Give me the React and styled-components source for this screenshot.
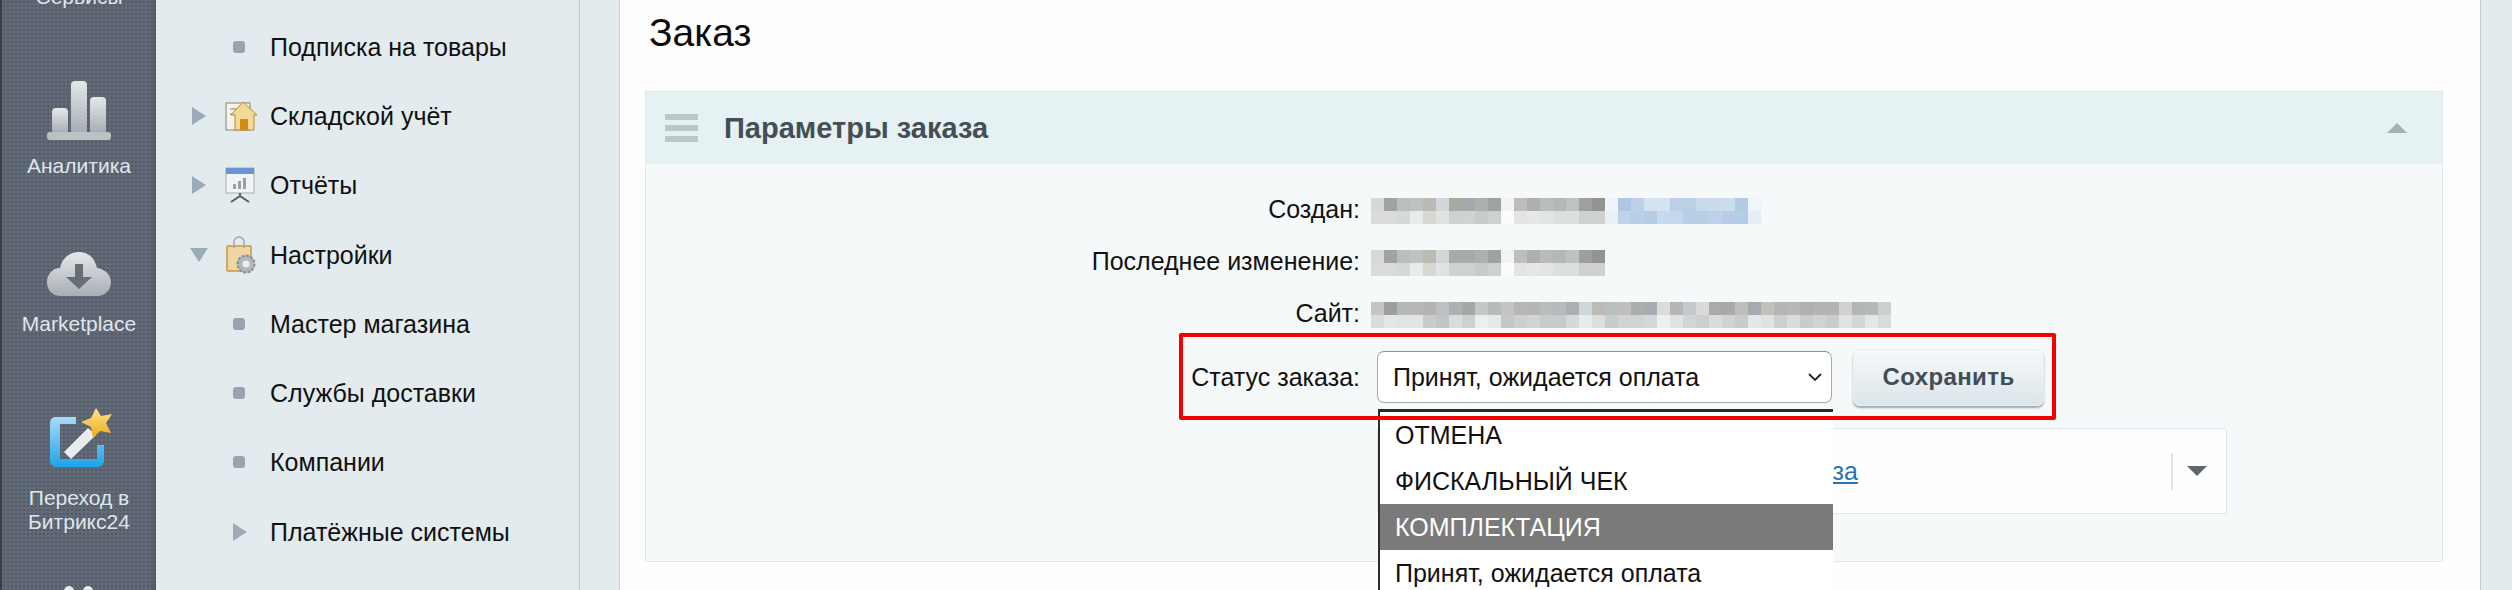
import React from "react";
import styled, { createGlobalStyle } from "styled-components";

const Global = createGlobalStyle`
  html, body { margin: 0; padding: 0; background: #fff; }
  body { font-family: "Liberation Sans", Arial, sans-serif; color: #000; }
`;

const Page = styled.div`
  display: flex;
  width: 2512px;
  height: 590px;
  overflow: hidden;
  background: #e3ebee;
`;

const Rail = styled.nav`
  flex: 0 0 156px;
  box-sizing: border-box;
  height: 590px;
  overflow: hidden;
  border-left: 2px solid #3b3d41;
  background-color: #626a77;
  background-image: radial-gradient(circle, rgba(70, 76, 88, 0.55) 1px, transparent 1.3px);
  background-size: 4px 4px;
  box-shadow: inset -5px 0 5px -3px rgba(60, 66, 78, 0.55);
  display: flex;
  flex-direction: column;
  align-items: center;
`;

const RailItem = styled.div`
  display: flex;
  flex-direction: column;
  align-items: center;
  flex: 0 0 auto;
  height: ${(p) => p.$h}px;
  box-sizing: border-box;
`;

const RailLabel = styled.span`
  color: #dfe6ea;
  font-size: 21px;
  line-height: 24px;
  text-align: center;
  margin-top: ${(p) => p.$mt || 0}px;
`;

const Tree = styled.aside`
  flex: 0 0 424px;
  box-sizing: border-box;
  border-right: 1px solid #b9cbd8;
  padding-top: 12px;
  background: #e3ebee;
`;

const TreeRow = styled.div`
  display: grid;
  grid-template-columns: 114px 1fr;
  align-items: center;
  height: 69.3px;
`;

const TreeMarks = styled.div`
  height: 100%;
  display: flex;
  align-items: center;
  padding-left: ${(p) => p.$pl}px;
`;

const ArrowSlot = styled.span`
  flex: 0 0 33px;
  display: flex;
  align-items: center;
`;

const Arrow = styled.span`
  display: block;
  width: 0;
  height: 0;
  border-top: 9px solid transparent;
  border-bottom: 9px solid transparent;
  border-left: 14px solid #9dabb9;
`;

const ArrowDown = styled.span`
  display: block;
  width: 0;
  height: 0;
  margin-left: -2px;
  border-left: 9px solid transparent;
  border-right: 9px solid transparent;
  border-top: 14px solid #9dabb9;
`;

const Bullet = styled.span`
  display: block;
  width: 12px;
  height: 12px;
  border-radius: 3px;
  background: #98a5b1;
`;

const TreeLabel = styled.span`
  font-size: 25px;
  line-height: 30px;
  color: #111;
  white-space: nowrap;
`;

const Gutter = styled.div`
  flex: 0 0 39px;
  border-right: 1px solid #cbd6da;
`;

const Content = styled.main`
  flex: 1 1 auto;
  min-width: 0;
  background: #fefefe;
  padding: 0 37px 0 25px;
`;

const Title = styled.h1`
  margin: 0 0 0 4px;
  height: 91px;
  padding-top: 11px;
  box-sizing: border-box;
  font-size: 39px;
  line-height: 44px;
  font-weight: 400;
  color: #0c0c0c;
`;

const Panel = styled.section`
  height: 471px;
  box-sizing: border-box;
  border: 1px solid #e0e8ea;
  background: #f5f9fa;
  position: relative;
`;

const PanelHead = styled.header`
  height: 72px;
  background: #e5f1f2;
  display: flex;
  align-items: center;
  padding: 0 35px 0 19px;
`;

const Burger = styled.span`
  display: flex;
  flex-direction: column;
  gap: 5px;
  width: 33px;
  margin-right: 26px;
  & > i {
    display: block;
    height: 6px;
    background: #bac8ca;
  }
`;

const PanelTitle = styled.h2`
  margin: 0;
  flex: 1;
  font-size: 29px;
  font-weight: 700;
  color: #454e54;
`;

const CollapseArrow = styled.span`
  width: 0;
  height: 0;
  border-left: 10px solid transparent;
  border-right: 10px solid transparent;
  border-bottom: 10px solid #a6b0b2;
  margin-top: -1px;
`;

const Fields = styled.div`
  display: grid;
  grid-template-columns: 714px 1fr;
  column-gap: 11px;
  grid-template-rows: 52px 52px 52px 72px 101px;
  align-items: center;
  padding-top: 21px;
`;

const FieldLabel = styled.div`
  text-align: right;
  font-size: 25px;
  color: #111;
  white-space: nowrap;
  padding-bottom: ${(p) => (p.$flush ? 0 : 3)}px;
`;

const Pixels = styled.div`
  display: grid;
  grid-template-rows: 13px 13px;
  grid-auto-flow: column;
  grid-auto-columns: 13px;
  width: max-content;
`;

const Pixel = styled.span`
  background: ${(p) => p.$c};
`;

const StatusRow = styled.div`
  display: flex;
  align-items: center;
  gap: 21px;
  margin-left: 6px;
  height: 72px;
`;

const SelectBox = styled.div`
  position: relative;
  width: 455px;
  height: 52px;
  box-sizing: border-box;
  display: flex;
  align-items: center;
  justify-content: space-between;
  padding: 0 9px 0 15px;
  background: #fff;
  border: 1px solid #a4acb0;
  border-top-color: #8d9397;
  border-radius: 7px;
  font-size: 25px;
  color: #111;
`;

const OptionList = styled.ul`
  position: absolute;
  z-index: 2;
  top: 57px;
  left: 0;
  width: 455px;
  margin: 0;
  padding: 0;
  list-style: none;
  background: #fff;
  border-top: 3px solid #2d2d2d;
  border-left: 2px solid #2d2d2d;
  box-sizing: border-box;
`;

const Option = styled.li`
  height: 46px;
  line-height: 46px;
  padding-left: 15px;
  font-size: 25px;
  background: ${(p) => (p.$active ? "#7a7a7a" : "#fff")};
  color: ${(p) => (p.$active ? "#fff" : "#111")};
`;

const SaveButton = styled.button`
  width: 191px;
  height: 57px;
  border: 1px solid #e9eef0;
  border-radius: 7px;
  background: linear-gradient(#f7f9fa, #dbe5e9);
  box-shadow: 0 2px 2px rgba(90, 100, 105, 0.55);
  font: 700 24px "Liberation Sans", Arial, sans-serif;
  letter-spacing: 0.4px;
  color: #434d57;
  padding: 0;
`;

const RedFrame = styled.div`
  position: absolute;
  z-index: 3;
  left: 533px;
  top: 241px;
  width: 877px;
  height: 87px;
  box-sizing: border-box;
  border: 4px solid #f50000;
  border-radius: 2px;
  pointer-events: none;
`;

const LinkBox = styled.div`
  grid-column: 2;
  align-self: start;
  margin: 15px 0 0 6px;
  width: 850px;
  height: 86px;
  box-sizing: border-box;
  background: #fefefe;
  border: 1px solid #e1e7ea;
  border-radius: 3px;
  display: flex;
  align-items: center;
  padding: 0 19px 0 404px;
`;

const OrderLink = styled.a`
  flex: 1;
  font-size: 25px;
  color: #2a71b5;
  text-decoration: underline;
`;

const Divider = styled.span`
  width: 2px;
  height: 37px;
  background: #e3e6e8;
  margin-right: 14px;
`;

const Caret = styled.span`
  width: 0;
  height: 0;
  border-left: 10px solid transparent;
  border-right: 10px solid transparent;
  border-top: 10px solid #5d676b;
`;

const RightStrip = styled.div`
  flex: 0 0 32px;
  box-sizing: border-box;
  border-left: 1px solid #c3ced2;
  background: #e3ebee;
`;

const Svg = styled.svg`
  display: block;
  flex: 0 0 auto;
`;

const WandSvg = styled(Svg)`
  margin-left: 5px;
`;

const ChartIcon = () => (
  <Svg width="64" height="59" viewBox="0 0 64 59">
    <defs>
      <linearGradient id="gr" x1="0" y1="0" x2="0" y2="1">
        <stop offset="0" stopColor="#e4e8ea" />
        <stop offset="1" stopColor="#a5abb1" />
      </linearGradient>
    </defs>
    <rect x="5" y="27" width="16" height="26" rx="4" fill="url(#gr)" />
    <rect x="24" y="0" width="16" height="53" rx="4" fill="url(#gr)" />
    <rect x="43" y="16" width="16" height="37" rx="4" fill="url(#gr)" />
    <rect x="0" y="51" width="64" height="8" rx="3" fill="#bcc1c6" />
  </Svg>
);

const CloudIcon = () => (
  <Svg width="64" height="45" viewBox="0 0 64 45">
    <defs>
      <linearGradient id="cl" x1="0" y1="0" x2="0" y2="1">
        <stop offset="0" stopColor="#e4e8ea" />
        <stop offset="1" stopColor="#a8aeb3" />
      </linearGradient>
    </defs>
    <path d="M14 44C5 44 0 38 0 30c0-8 6-14 13-14C15 6 23 0 32 0c9 0 16 6 18 16 8 1 14 7 14 14 0 8-6 14-14 14z" fill="url(#cl)" />
    <path d="M28 12h8v13h9L32 37 19 25h9z" fill="#686e77" />
  </Svg>
);

const WandIcon = () => (
  <WandSvg width="62" height="62" viewBox="0 0 62 62">
    <defs>
      <linearGradient id="bl" x1="0" y1="0" x2="0" y2="1">
        <stop offset="0" stopColor="#a7dcf6" />
        <stop offset="1" stopColor="#1ea3ea" />
      </linearGradient>
      <linearGradient id="st" x1="0" y1="0" x2="0" y2="1">
        <stop offset="0" stopColor="#ffe48a" />
        <stop offset="1" stopColor="#eda91e" />
      </linearGradient>
    </defs>
    <path d="M5 9h21v7H10v35h37V37h7v16a6 6 0 0 1-6 6H6a6 6 0 0 1-6-6V14a6 6 0 0 1 5-5z" fill="url(#bl)" />
    <path d="M14 44l24-24 8 7-25 24z" fill="#e8ecee" />
    <path d="M46 0l5 8 11 -2-6 9 5 10-11-2-7 7-2-11-10-5 10-4z" fill="url(#st)" />
  </WandSvg>
);

const PeopleIcon = () => (
  <Svg width="30" height="12" viewBox="0 0 30 12">
    <circle cx="5" cy="5" r="5" fill="#e8ecee" />
    <circle cx="24" cy="5" r="5" fill="#e8ecee" />
  </Svg>
);

const HouseIcon = () => (
  <Svg width="32" height="32" viewBox="0 0 32 32">
    <rect x="1" y="3" width="24" height="27" fill="#f6f3ec" stroke="#a9a59c" strokeWidth="1.5" />
    <path d="M5 9h8M5 14h5" stroke="#a9a59c" strokeWidth="1.5" />
    <path d="M18 2L6 15h4v15h19V15h3z" fill="#f3d998" stroke="#b98a2c" strokeWidth="1" />
    <rect x="15" y="19" width="8" height="11" fill="#d88c0e" />
  </Svg>
);

const BoardIcon = () => (
  <Svg width="30" height="36" viewBox="0 0 30 36">
    <rect x="1" y="1" width="28" height="25" fill="#f1f3f6" stroke="#a8adb2" />
    <rect x="1" y="1" width="28" height="6" fill="#6a95d2" />
    <rect x="8" y="17" width="3" height="5" fill="#9aa0a4" />
    <rect x="13" y="14" width="3" height="8" fill="#9aa0a4" />
    <rect x="18" y="11" width="3" height="11" fill="#9aa0a4" />
    <path d="M15 26v4M15 29L6 35M15 29l9 6" stroke="#55595c" strokeWidth="2" fill="none" />
  </Svg>
);

const BagIcon = () => (
  <Svg width="32" height="38" viewBox="0 0 32 38">
    <rect x="2" y="10" width="24" height="25" rx="1" fill="#f0d6a4" stroke="#c9983f" strokeWidth="1.5" />
    <path d="M9 12V6a5 5 0 0 1 10 0v6" fill="none" stroke="#a9a49b" strokeWidth="1.5" />
    <circle cx="21" cy="28" r="8.5" fill="#b4b7b9" stroke="#8a8e90" strokeWidth="2" strokeDasharray="3 1.4" />
    <circle cx="21" cy="28" r="3.5" fill="#eceeef" />
  </Svg>
);

const Chevron = () => (
  <Svg width="14" height="9" viewBox="0 0 14 9">
    <path d="M1 1l6 6 6-6" fill="none" stroke="#222" strokeWidth="1.8" />
  </Svg>
);

const r1 = "#d8d8d5 #9fa3a1 #b8bfbe #bfc2c0 #bcbab5 #d2d7dc #a9a9a3 #a5aaad #aeb0ae #a0a2a0 #f2f4f3 #bebdbb #acb0b0 #bbbcbd #b6b8b7 #bec2c1 #9fa09e #939490 #eef4f9 #aec6e2 #bcd1e7 #d3e3ef #d4e3f0 #bbd0e7 #bbd0e7 #c8dbec #cadcec #cbdcea #b4cae3 #eff5fa";
const r1b = "#d9dcdb #dadbdb #d6d9d9 #e9ecec #d6d8d6 #e0e2e0 #cfd2d2 #cfd3d3 #c7cbc9 #ccd1d1 #fbfcfc #e3e5e4 #e6e8e7 #e1e5e6 #dcdfdf #dcdfdf #cdd1d1 #cfd2d1 #e9f1f8 #bcd3e9 #b8cfe6 #b6cee5 #c6daee #c4d8ec #b8cfe6 #b8cfe6 #bcd1ea #b6cce8 #b2cde6 #e4eef6";
const r2 = "#d8d8d5 #9fa3a3 #b8bfbe #bfc2c0 #bcbcb5 #d2d7dc #a9a9a5 #a5aaaa #aeb0b0 #a0a2a0 #f2f4f3 #bebfbb #acb0b0 #bbbab8 #b6b8b5 #bec2c1 #9fa09e #939490";
const r2b = "#d9dcdb #dadbdb #d6d9d9 #e9ecec #d6d8d6 #e0e3e4 #cfd2d2 #cfd1d1 #c7cbcb #ccd1d1 #fbfcfc #e3e3e2 #e6e8e7 #e1e5e6 #dcdfdf #dcdfdf #cdd1d2 #cfd2d2";
const r3 = "#c4c5c4 #9c9e99 #b3b8b8 #b9b7b5 #b4b5b3 #bcc1c0 #adb1b3 #a6a8a8 #c6c8c6 #b9babc #c3c5c4 #b6b7b6 #b5b7b7 #b9bdbd #b7baba #adaeb0 #d1d7d8 #bdbbb7 #b9bebe #c0bfbd #acadad #a8abaf #dcdcda #b5b7b7 #c3c9cc #d9dbd9 #a9abab #a9aaa8 #bdbfba #a7aaae #c0c1bd #b5b6b5 #b7b9b9 #b0afb2 #b4b5b3 #b4b5b3 #d0d1cf #b4b5b5 #b6b9b8 #cdcfcd";
const r3b = "#d9dcde #e5e7e6 #dfe5e5 #e3e5e3 #cccbc8 #bfc6ca #d9dcde #cfd0d2 #ecefef #e6e9e9 #c5c6c5 #ccd0d1 #d0d4d4 #c8ccce #c6cbce #d6d9db #e8ebec #dcdfdf #c8cdcc #d2d5d4 #d0d4d3 #d4d8d8 #eef0ef #dfe3e4 #d0d5d8 #cccfcd #d9dcdc #d0d3d4 #c8cccb #e4e8eb #e0e3de #ccd0d1 #dadddf #c8ccce #d1d3d1 #c9cdce #e0e2e1 #d3d7d8 #e3e7e7 #d8dcdc";

const PixelBlock = ({ top, bottom }) => {
  const t = top.split(" ");
  const b = bottom.split(" ");
  return (
    <Pixels>
      {t.flatMap((c, i) => [<Pixel key={`t${i}`} $c={c} />, <Pixel key={`b${i}`} $c={b[i]} />])}
    </Pixels>
  );
};

const treeRows = [
  { label: "Подписка на товары", kind: "bullet" },
  { label: "Складской учёт", kind: "arrow", icon: <HouseIcon /> },
  { label: "Отчёты", kind: "arrow", icon: <BoardIcon /> },
  { label: "Настройки", kind: "down", icon: <BagIcon /> },
  { label: "Мастер магазина", kind: "bullet" },
  { label: "Службы доставки", kind: "bullet" },
  { label: "Компании", kind: "bullet" },
  { label: "Платёжные системы", kind: "sub" },
];

const TreeMark = ({ kind, icon }) => {
  if (kind === "bullet") return <TreeMarks $pl={77}><Bullet /></TreeMarks>;
  if (kind === "sub") return <TreeMarks $pl={77}><Arrow /></TreeMarks>;
  return (
    <TreeMarks $pl={36}>
      <ArrowSlot>{kind === "down" ? <ArrowDown /> : <Arrow />}</ArrowSlot>
      {icon}
    </TreeMarks>
  );
};

export default function App() {
  return (
    <>
      <Global />
      <Page>
        <Rail>
          <RailItem $h={81}>
            <RailLabel $mt={-15}>Сервисы</RailLabel>
          </RailItem>
          <RailItem $h={171}>
            <ChartIcon />
            <RailLabel $mt={14}>Аналитика</RailLabel>
          </RailItem>
          <RailItem $h={156}>
            <CloudIcon />
            <RailLabel $mt={15}>Marketplace</RailLabel>
          </RailItem>
          <RailItem $h={178}>
            <WandIcon />
            <RailLabel $mt={16}>Переход в<br />Битрикс24</RailLabel>
          </RailItem>
          <RailItem $h={12}>
            <PeopleIcon />
          </RailItem>
        </Rail>
        <Tree>
          {treeRows.map((r) => (
            <TreeRow key={r.label}>
              <TreeMark kind={r.kind} icon={r.icon} />
              <TreeLabel>{r.label}</TreeLabel>
            </TreeRow>
          ))}
        </Tree>
        <Gutter />
        <Content>
          <Title>Заказ</Title>
          <Panel>
            <PanelHead>
              <Burger><i /><i /><i /></Burger>
              <PanelTitle>Параметры заказа</PanelTitle>
              <CollapseArrow />
            </PanelHead>
            <Fields>
              <FieldLabel>Создан:</FieldLabel>
              <PixelBlock top={r1} bottom={r1b} />
              <FieldLabel>Последнее изменение:</FieldLabel>
              <PixelBlock top={r2} bottom={r2b} />
              <FieldLabel>Сайт:</FieldLabel>
              <PixelBlock top={r3} bottom={r3b} />
              <FieldLabel $flush>Статус заказа:</FieldLabel>
              <StatusRow>
                <SelectBox>
                  Принят, ожидается оплата
                  <Chevron />
                  <OptionList>
                    <Option>ОТМЕНА</Option>
                    <Option>ФИСКАЛЬНЫЙ ЧЕК</Option>
                    <Option $active>КОМПЛЕКТАЦИЯ</Option>
                    <Option>Принят, ожидается оплата</Option>
                  </OptionList>
                </SelectBox>
                <SaveButton>Сохранить</SaveButton>
              </StatusRow>
              <LinkBox>
                <OrderLink href="#">заказа</OrderLink>
                <Divider />
                <Caret />
              </LinkBox>
            </Fields>
            <RedFrame />
          </Panel>
        </Content>
        <RightStrip />
      </Page>
    </>
  );
}
